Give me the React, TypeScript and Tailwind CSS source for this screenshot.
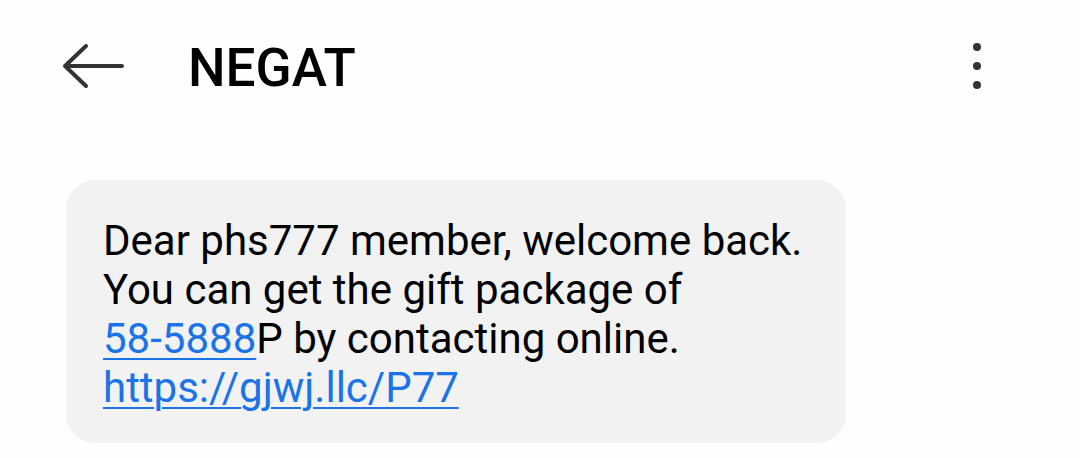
import React from 'react'

const App: React.FC = () => {
  return (
    <div
      className="w-[1080px] h-[458px] overflow-hidden bg-[#fefefe] text-black"
      style={{ fontFamily: 'Roboto, "Noto Sans", sans-serif' }}
    >
      {/* header */}
      <div className="h-[132px] flex items-start pt-[30px] pl-[60px] pr-[93px]">
        <button className="w-[66px] h-[72px] flex items-center justify-start">
          <svg width="66" height="48" viewBox="0 0 66 48" fill="none">
            <path
              d="M62 24H5M26 4L5 24L26 44"
              stroke="#333"
              strokeWidth="4"
              strokeLinecap="round"
              strokeLinejoin="round"
            />
          </svg>
        </button>
        <h1 className="ml-[62px] mt-[2px] text-[53px] leading-[72px] font-medium">NEGAT</h1>
        <div className="ml-auto h-[72px] w-[20px] flex flex-col items-center justify-center gap-[11px]">
          <span className="w-[8px] h-[8px] rounded-full bg-[#333]" />
          <span className="w-[8px] h-[8px] rounded-full bg-[#333]" />
          <span className="w-[8px] h-[8px] rounded-full bg-[#333]" />
        </div>
      </div>

      {/* message */}
      <div className="pl-[66px] pt-[48px]">
        <div className="w-[780px] rounded-[30px] bg-[#f2f2f2] pl-[37px] pr-[30px] pt-[36px] pb-[31px]">
          <p className="text-[42px] leading-[49px] text-black">
            Dear phs777 member, welcome back.
            <br />
            You can get the gift package of
            <br />
            <a className="text-[#1a73e8] underline underline-offset-[5px] decoration-2">58-5888</a>P by contacting online.
            <br />
            <a className="text-[#1a73e8] underline underline-offset-[5px] decoration-2">https://gjwj.llc/P77</a>
          </p>
        </div>
      </div>
    </div>
  )
}

export default App
